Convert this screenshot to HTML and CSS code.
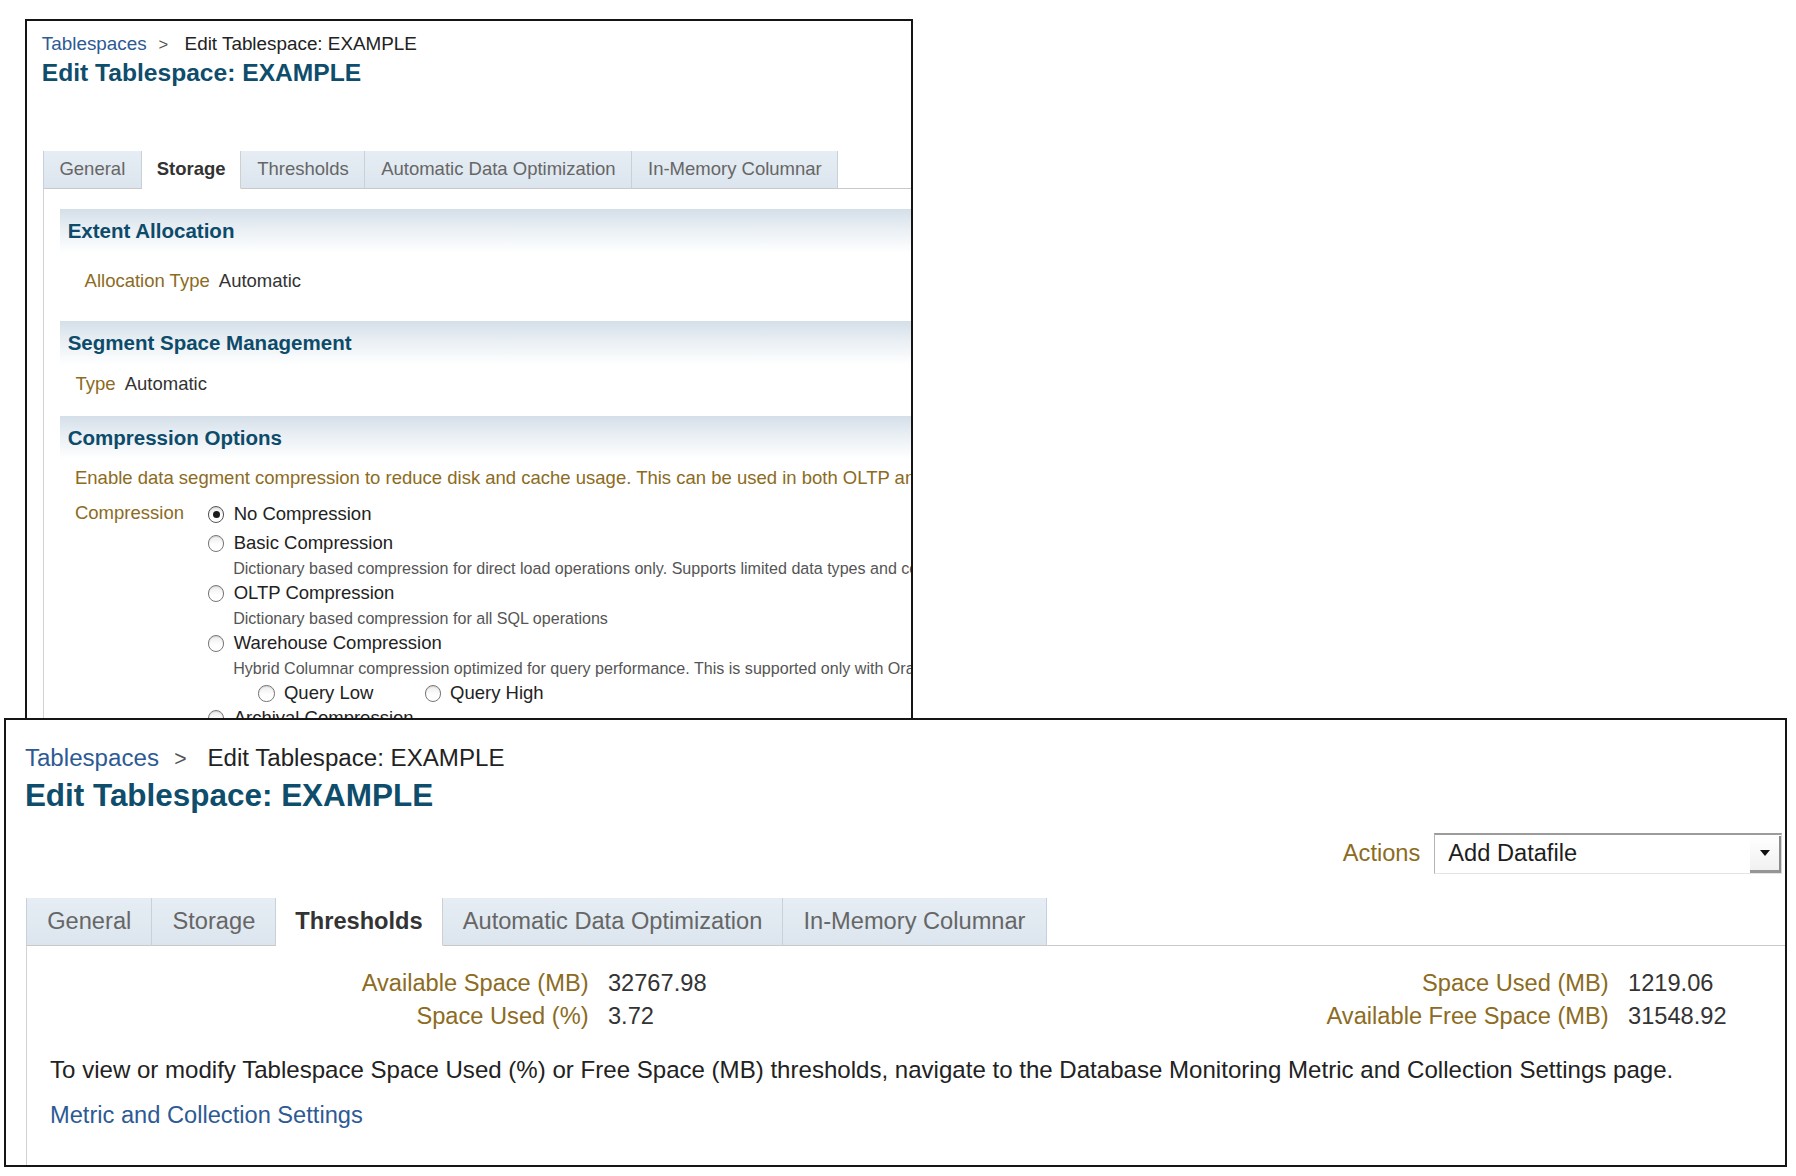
FILE: index.html
```html
<!DOCTYPE html>
<html lang="en">
<head>
<meta charset="utf-8">
<title>Edit Tablespace: EXAMPLE</title>
<link rel="stylesheet" href="styles.css">
</head>
<body>
<div class="win win-top">
  <div class="head">
    <div class="crumb"><span class="link">Tablespaces</span><span class="sep">&gt;</span><span>Edit Tablespace: EXAMPLE</span></div>
    <h1 class="title">Edit Tablespace: EXAMPLE</h1>
    <div class="toolbar"></div>
  </div>
  <div class="tabwrap">
    <div class="tabs">
      <div class="tab first">General</div>
      <div class="tab sel">Storage</div>
      <div class="tab">Thresholds</div>
      <div class="tab">Automatic Data Optimization</div>
      <div class="tab">In-Memory Columnar</div>
      <div class="tabfill"></div>
    </div>
    <div class="panel panel-storage">
      <div class="band">Extent Allocation</div>
      <div class="fr r-alloc"><span class="lbl">Allocation Type</span><span class="val">Automatic</span></div>
      <div class="band">Segment Space Management</div>
      <div class="fr r-type"><span class="lbl">Type</span><span class="val">Automatic</span></div>
      <div class="band">Compression Options</div>
      <div class="fr r-enable">Enable data segment compression to reduce disk and cache usage. This can be used in both OLTP and data warehouse environments.</div>
      <div class="cform">
        <div class="clbl">Compression</div>
        <div class="opts">
          <div class="opt opt-first"><span class="radio on"></span>No Compression</div>
          <div class="opt"><span class="radio"></span>Basic Compression</div>
          <div class="desc">Dictionary based compression for direct load operations only. Supports limited data types and compression algorithms.</div>
          <div class="opt"><span class="radio"></span>OLTP Compression</div>
          <div class="desc">Dictionary based compression for all SQL operations</div>
          <div class="opt"><span class="radio"></span>Warehouse Compression</div>
          <div class="desc">Hybrid Columnar compression optimized for query performance. This is supported only with Oracle Exadata storage.</div>
          <div class="opt sub"><span class="radio"></span>Query Low<span class="radio gap2"></span>Query High</div>
          <div class="opt"><span class="radio"></span>Archival Compression</div>
        </div>
      </div>
    </div>
  </div>
</div>

<div class="win win-bottom">
  <div class="head">
    <div class="crumb"><span class="link">Tablespaces</span><span class="sep">&gt;</span><span>Edit Tablespace: EXAMPLE</span></div>
    <h1 class="title">Edit Tablespace: EXAMPLE</h1>
    <div class="toolbar">
      <span class="lbl act-lbl">Actions</span>
      <div class="select">
        <span class="sel-val">Add Datafile</span>
        <span class="sel-btn"><span class="tri"></span></span>
      </div>
    </div>
  </div>
  <div class="tabwrap">
    <div class="tabs">
      <div class="tab first">General</div>
      <div class="tab">Storage</div>
      <div class="tab sel">Thresholds</div>
      <div class="tab">Automatic Data Optimization</div>
      <div class="tab">In-Memory Columnar</div>
      <div class="tabfill"></div>
    </div>
    <div class="panel panel-thr">
      <div class="stats">
        <span class="lbl sl">Available Space (MB)</span><span class="val">32767.98</span>
        <span class="lbl sl">Space Used (MB)</span><span class="val">1219.06</span>
        <span class="lbl sl">Space Used (%)</span><span class="val link">3.72</span>
        <span class="lbl sl">Available Free Space (MB)</span><span class="val link">31548.92</span>
      </div>
      <p class="para">To view or modify Tablespace Space Used (%) or Free Space (MB) thresholds, navigate to the Database Monitoring Metric and Collection Settings page.</p>
      <div class="link mlink">Metric and Collection Settings</div>
    </div>
  </div>
</div>
</body>
</html>
```

FILE: styles.css
```css
html, body {
  margin: 0;
  padding: 0;
  background: #ffffff;
}

body {
  font-family: "Liberation Sans", Arial, Helvetica, sans-serif;
  color: #222222;
}

.win {
  box-sizing: border-box;
  border: 2px solid #151515;
  background: #ffffff;
  overflow: hidden;
  display: flex;
  flex-direction: column;
}

.win-top {
  font-size: 18.5px;
  margin: 19px 0 0 25px;
  width: 888px;
  height: 699px;
  border-bottom: none;
}

.win-bottom {
  font-size: 23.65px;
  margin: 0 0 0 4px;
  width: 1783px;
  height: 449px;
}

/* header */
.head {
  padding: 0.65em 0 0 0.8em;
}

.win-bottom .head {
  padding-top: 1.03em;
}

.crumb {
  font-size: 1.02em;
  line-height: 1.13em;
  white-space: nowrap;
  color: #222222;
}

.link {
  color: #2d5a94;
}

.sep {
  font-size: 0.88em;
  color: #555555;
  padding: 0 0.98em 0 0.72em;
}

.title {
  margin: 0.16em 0 0 0;
  font-size: 1.33em;
  line-height: 1.15;
  font-weight: bold;
  color: #0e4d6b;
  white-space: nowrap;
}

.toolbar {
  box-sizing: content-box;
  min-height: 1.73em;
  padding: 0.8em 0.13em 1.02em 0;
  display: flex;
  justify-content: flex-end;
  align-items: center;
}

.win-top .toolbar {
  padding-bottom: 0.9em;
}

.lbl {
  color: #8c6b22;
}

.act-lbl {
  margin-right: 0.59em;
}

.select {
  box-sizing: border-box;
  width: 14.7em;
  height: 1.73em;
  display: flex;
  align-items: stretch;
  border-top: 2px solid #9c9c9c;
  border-left: 1px solid #b4b4b4;
  border-right: 1px solid #d8d8d8;
  border-bottom: 1px solid #e4e4e4;
  background: #ffffff;
}

.sel-val {
  flex: 1;
  padding-left: 0.55em;
  display: flex;
  align-items: center;
  color: #1e1e1e;
}

.sel-btn {
  box-sizing: border-box;
  width: 1.3em;
  margin-top: 1px;
  border-right: 2px solid #8c8c8c;
  border-bottom: 3px solid #959595;
  background: linear-gradient(#ffffff, #f1f1f1);
  display: flex;
  align-items: center;
  justify-content: center;
}

.tri {
  width: 0;
  height: 0;
  border-left: 5px solid transparent;
  border-right: 5px solid transparent;
  border-top: 6px solid #111111;
}

/* tabs */
.tabwrap {
  flex: 1;
  display: flex;
  flex-direction: column;
  margin-left: 0.85em;
}

.tabs {
  display: flex;
  height: 2.05em;
}

.tab {
  box-sizing: border-box;
  height: 100%;
  padding: 0 0.85em;
  display: flex;
  align-items: center;
  white-space: nowrap;
  color: #666666;
  background: linear-gradient(#e6edf4, #dce5ee);
  border-right: 1px solid #c7d1db;
  border-bottom: 1px solid #c9c9c9;
}

.tab.first {
  border-left: 1px solid #c7d1db;
}

.tab.sel {
  background: #ffffff;
  color: #333333;
  font-weight: bold;
  padding: 0 0.8em;
  border-right-color: #cfcfcf;
  border-bottom-color: #ffffff;
}

.tabfill {
  flex: 1;
  border-bottom: 1px solid #c9c9c9;
}

.panel {
  flex: 1;
  border-left: 1px solid #d2d2d2;
}

/* storage panel */
.panel-storage {
  padding: 1.08em 0 0 0.86em;
  white-space: nowrap;
}

.band {
  font-size: 1.11em;
  line-height: 1.15;
  padding: 0.49em 0.39em;
  font-weight: bold;
  color: #0d4b6a;
  background: linear-gradient(to bottom, #d5dfe9 0%, #e9eff4 45%, #ffffff 100%);
}

.fr {
  line-height: 1.15em;
  display: flex;
  gap: 0.49em;
}

.val {
  color: #333333;
}

.r-alloc {
  margin: 0.95em 0 1.62em 0;
  padding-left: 1.35em;
}

.r-type {
  margin: 0.43em 0 1.15em 0;
  padding-left: 0.86em;
}

.r-enable {
  margin-top: 0.4em;
  padding-left: 0.83em;
  color: #8c6b22;
}

.cform {
  margin-top: 0.76em;
  padding-left: 0.83em;
  display: flex;
}

.clbl {
  width: 7.2em;
  flex: none;
  line-height: 1.15em;
  color: #8c6b22;
}

.opt {
  line-height: 1.35em;
  display: flex;
  align-items: center;
  color: #222222;
}

.opt-first {
  margin-bottom: 0.22em;
}

.opt.sub {
  padding-left: 2.72em;
}

.radio {
  box-sizing: border-box;
  flex: none;
  position: relative;
  width: 0.88em;
  height: 0.88em;
  margin-right: 0.5em;
  border: 1px solid #777777;
  border-radius: 50%;
  background: linear-gradient(#ececec, #ffffff 60%);
  box-shadow: inset 0 1px 1px rgba(0, 0, 0, 0.12);
}

.radio.on {
  border-color: #555555;
}

.radio.on::after {
  content: "";
  position: absolute;
  left: 50%;
  top: 50%;
  width: 7px;
  height: 7px;
  margin: -3.5px 0 0 -3.5px;
  border-radius: 50%;
  background: #1b1b1b;
}

.radio.gap2 {
  margin-left: 2.76em;
}

.desc {
  font-size: 0.87em;
  line-height: 1.553;
  padding-left: 1.553em;
  color: #555555;
}

/* thresholds panel */
.panel-thr {
  padding: 0.87em 2.47em 0 0.97em;
}

.stats {
  display: grid;
  grid-template-columns: 22.77em 1fr auto auto;
  column-gap: 0.82em;
  line-height: 1.42em;
  white-space: nowrap;
}

.sl {
  text-align: right;
}

.para {
  margin: 0.93em 0 0 0;
  font-size: 1.018em;
  line-height: 1.13em;
  color: #222222;
  white-space: nowrap;
}

.mlink {
  margin-top: 0.79em;
  line-height: 1.15em;
}
```
